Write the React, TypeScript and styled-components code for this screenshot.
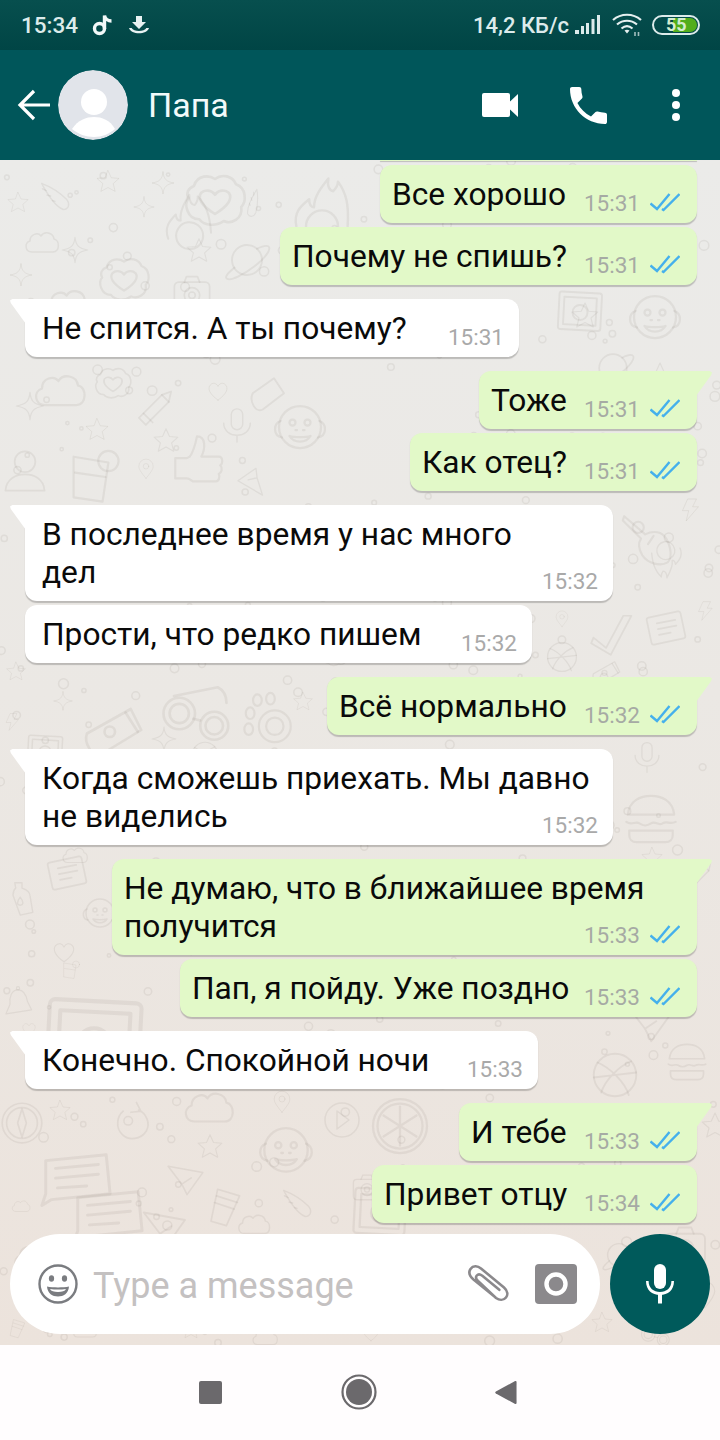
import React from "react";
import styled, { createGlobalStyle } from "styled-components";

const Global = createGlobalStyle`
  html, body { margin: 0; padding: 0; background: #fff; }
  * { box-sizing: border-box; }
`;

const Screen = styled.div`
  width: 720px;
  height: 1440px;
  display: flex;
  flex-direction: column;
  overflow: hidden;
  font-family: Roboto, "Noto Sans", sans-serif;
`;

const StatusBar = styled.div`
  height: 50px;
  flex: none;
  display: flex;
  align-items: center;
  padding: 0 20px 0 21px;
  background: linear-gradient(#074f4e, #004545);
  color: #dcebeb;
  font-size: 22.5px;
  font-weight: 500;
`;
const StatusLeft = styled.div`
  display: flex;
  align-items: center;
  gap: 14px;
`;
const StatusRight = styled.div`
  margin-left: auto;
  display: flex;
  align-items: center;
  gap: 5px;
`;
const StatusTime = styled.span`
  width: 57px;
`;
const Speed = styled.span`
  font-size: 22px;
`;
const WifiIcon = styled.svg`
  margin-left: 5px;
  fill: none;
  stroke: #e6f0f0;
  stroke-width: 2.2;
`;
const Battery = styled.div`
  position: relative;
  width: 48px;
  height: 20px;
  margin-left: 5px;
  border: 2px solid #dcebeb;
  border-radius: 10px;
  overflow: hidden;
  display: flex;
  justify-content: flex-end;
  align-items: stretch;
  padding: 1px;
`;
const BatteryFill = styled.div`
  width: 24px;
  background: #52ad1c;
  border-radius: 0 8px 8px 0;
`;
const BatteryText = styled.span`
  position: absolute;
  left: 12px;
  top: -3px;
  font-size: 18px;
  line-height: 22px;
  font-weight: 700;
  color: #d4ecd0;
`;

const Toolbar = styled.header`
  height: 110px;
  flex: none;
  display: flex;
  align-items: center;
  padding-left: 17px;
  background: #00565a;
  color: #fff;
`;
const Avatar = styled.div`
  width: 70px;
  height: 70px;
  margin-left: 7px;
  border-radius: 50%;
  overflow: hidden;
  flex: none;
`;
const Title = styled.div`
  margin-left: 20px;
  font-size: 34px;
  color: #f2fafa;
`;
const ToolActions = styled.div`
  margin-left: auto;
  display: flex;
  align-items: center;
  padding-right: 38px;
`;
const ToolIcon = styled.svg<{ $ml: number }>`
  display: block;
  margin-left: ${(p) => p.$ml}px;
  fill: #fff;
`;

const Chat = styled.main`
  position: relative;
  flex: 1;
  min-height: 0;
  display: flex;
  flex-direction: column;
  overflow: hidden;
  background: linear-gradient(#ebebe9 0%, #ebe8e4 45%, #ece3dc 100%);
`;
const Wallpaper = styled.svg`
  position: absolute;
  inset: 0;
  fill: none;
  stroke: rgba(118, 108, 96, 0.1);
  stroke-width: 1.5;
  stroke-linejoin: round;
  stroke-linecap: round;
`;
const MessageList = styled.div`
  position: relative;
  flex: 1;
  min-height: 0;
  display: flex;
  flex-direction: column;
`;
const PrevEdge = styled.div`
  align-self: flex-end;
  width: 317px;
  height: 1px;
  margin-right: 23px;
  background: #e2f8c8;
  box-shadow: 0 1px 1px rgba(0, 0, 0, 0.22);
`;
const Bubble = styled.div<{ $out?: boolean; $tail?: boolean; $w: number }>`
  position: relative;
  width: ${(p) => p.$w}px;
  align-self: ${(p) => (p.$out ? "flex-end" : "flex-start")};
  margin: ${(p) => (p.$tail ? 14 : 4)}px ${(p) => (p.$out ? "23px" : "0")} 0
    ${(p) => (p.$out ? "0" : "25px")};
  padding: 11px ${(p) => (p.$out ? 17 : 15)}px 9px ${(p) => (p.$out ? 12 : 17)}px;
  background: ${(p) => (p.$out ? "#e2f9c8" : "#ffffff")};
  border-radius: 12px;
  ${(p) => p.$tail && (p.$out ? "border-top-right-radius: 0;" : "border-top-left-radius: 0;")}
  box-shadow: 0 1.5px 1px rgba(0, 0, 0, 0.2);
  font-size: 31.7px;
  line-height: 38px;
  color: #0a0a0a;

  ${(p) =>
    p.$tail &&
    `&::before {
      content: "";
      position: absolute;
      top: 0;
      ${p.$out ? "right: -15px;" : "left: -15px;"}
      width: 16px;
      height: 25px;
      background: ${p.$out ? "#e2f9c8" : "#ffffff"};
      clip-path: ${
        p.$out
          ? "polygon(0 0, 85% 0, 100% 6%, 95% 16%, 0 100%)"
          : "polygon(100% 0, 15% 0, 0 6%, 5% 16%, 100% 100%)"
      };
    }`}
`;
const LastLine = styled.div`
  display: flex;
  justify-content: space-between;
  align-items: flex-end;
  white-space: nowrap;
`;
const Meta = styled.div<{ $out?: boolean }>`
  display: flex;
  align-items: center;
  gap: 10px;
  height: 24px;
  margin-bottom: -1px;
  font-size: 22.5px;
  line-height: 24px;
  color: ${(p) => (p.$out ? "#a6aaa4" : "#a9a9a9")};
`;

const InputRow = styled.div`
  position: relative;
  flex: none;
  display: flex;
  gap: 10px;
  padding: 0 10px 11px;
`;
const InputPill = styled.div`
  flex: 1;
  height: 100px;
  display: flex;
  align-items: center;
  padding: 0 23px 0 28px;
  background: #fff;
  border-radius: 50px;
`;
const Placeholder = styled.span`
  margin: 3px 0 0 15px;
  font-size: 36px;
  color: #c4c1c1;
`;
const PillIcons = styled.div`
  margin-left: auto;
  display: flex;
  align-items: center;
  gap: 26px;
`;
const MicButton = styled.div`
  width: 100px;
  height: 100px;
  flex: none;
  display: flex;
  align-items: center;
  justify-content: center;
  border-radius: 50%;
  background: #005a5b;
`;

const NavBar = styled.nav`
  height: 95px;
  flex: none;
  display: grid;
  grid-template-columns: 149px 148px 146px;
  justify-content: center;
  align-items: center;
  justify-items: center;
  padding: 0 6px 1px 0;
  background: #fffdfe;
`;
const NavSquare = styled.div`
  width: 23px;
  height: 23px;
  border-radius: 2px;
  background: #6b696c;
`;

type Msg = { lines: string[]; time: string; out?: boolean; tail?: boolean; w: number };
const messages: Msg[] = [
  { lines: ["Все хорошо"], time: "15:31", out: true, w: 317 },
  { lines: ["Почему не спишь?"], time: "15:31", out: true, w: 417 },
  { lines: ["Не спится. А ты почему?"], time: "15:31", tail: true, w: 494 },
  { lines: ["Тоже"], time: "15:31", out: true, tail: true, w: 218 },
  { lines: ["Как отец?"], time: "15:31", out: true, w: 287 },
  { lines: ["В последнее время у нас много", "дел"], time: "15:32", tail: true, w: 588 },
  { lines: ["Прости, что редко пишем"], time: "15:32", w: 507 },
  { lines: ["Всё нормально"], time: "15:32", out: true, tail: true, w: 370 },
  { lines: ["Когда сможешь приехать. Мы давно", "не виделись"], time: "15:32", tail: true, w: 588 },
  { lines: ["Не думаю, что в ближайшее время", "получится"], time: "15:33", out: true, tail: true, w: 585 },
  { lines: ["Пап, я пойду. Уже поздно"], time: "15:33", out: true, w: 517 },
  { lines: ["Конечно. Спокойной ночи"], time: "15:33", tail: true, w: 513 },
  { lines: ["И тебе"], time: "15:33", out: true, tail: true, w: 238 },
  { lines: ["Привет отцу"], time: "15:34", out: true, w: 325 },
];

const Ticks = () => (
  <svg width="30" height="20" viewBox="0 0 30 20" fill="none" stroke="#45b0ec" strokeWidth="2.4">
    <path d="M0.5 10.5 L7 16 L19.5 1" />
    <path d="M12 16 L13.5 17 L29.5 1" />
  </svg>
);

/* ---- wallpaper doodles, each drawn in a 40x40 box ---- */
const shapes: Record<string, React.ReactNode> = {
  star: <path d="M20 4l5 11 12 1-9 8 3 12-11-6-11 6 3-12-9-8 12-1z" />,
  sparkle: <path d="M20 3c1 11 5 15 17 17-12 2-16 6-17 17-1-11-5-15-17-17 12-2 16-6 17-17z" />,
  heart: <path d="M20 34C6 24 4 16 8 11c4-5 10-3 12 2 2-5 8-7 12-2 4 5 2 13-12 23z" />,
  cloud: <path d="M10 30c-7 0-8-9-2-11 0-7 8-9 11-5 3-5 12-4 13 3 6 1 6 13-1 13z" />,
  puff: (
    <>
      <path d="M8 12c2-7 9-6 12-4 4-3 10-2 12 3 6 2 6 10 3 13 1 7-6 10-10 8-4 3-11 3-14-1-7 0-9-9-6-12-2-3 0-6 3-7z" />
      <path d="M20 28c-8-5-10-9-8-12 2-2 6-2 8 1 2-3 6-3 8-1 2 3 0 7-8 12z" />
    </>
  ),
  planet: (
    <>
      <circle cx="20" cy="20" r="12" />
      <path d="M10 26C4 31 2 34 4 35c3 2 13-3 22-10s14-14 11-16c-2-1-5 0-9 2" />
    </>
  ),
  camera: (
    <>
      <rect x="4" y="11" width="32" height="24" rx="4" />
      <path d="M13 11l2-5h10l2 5" />
      <circle cx="20" cy="23" r="7" />
      <circle cx="20" cy="23" r="3" />
    </>
  ),
  comet: (
    <>
      <path d="M4 6c8 3 20 10 28 18 4 5 2 11-4 11-8-3-16-14-24-29z" />
      <path d="M9 14l-4-2M14 20l-4-1M19 26l-3-1" />
    </>
  ),
  flame: (
    <>
      <path d="M4 34c-2-9 3-13 8-17 0 3 1 5 3 5 0-7 5-13 9-18-1 5 1 8 3 8 2-2 3-4 3-6 5 7 7 14 6 28" />
      <circle cx="20" cy="34" r="10" />
    </>
  ),
  pencil: (
    <>
      <path d="M6 26L26 6l8-3-2 9-20 20z" />
      <path d="M10 22l8 8M26 6l6 6" />
    </>
  ),
  mic: (
    <>
      <rect x="14" y="3" width="12" height="22" rx="6" />
      <path d="M6 18c0 17 28 17 28 0M20 31v7" />
    </>
  ),
  thumb: (
    <path d="M15 17c3-4 4-9 5-14 6 0 6 8 3 14h12c3 0 3 5 1 6 2 2 1 5-1 6 1 2 0 5-2 5H17c-2-1-2-2-4-2H5V18h8z" />
  ),
  glass: (
    <>
      <path d="M8 6l24 4-4 27-20-3z" />
      <circle cx="32" cy="9" r="7" />
      <path d="M9 17l21 3" />
    </>
  ),
  person: (
    <>
      <circle cx="20" cy="12" r="9" />
      <path d="M3 37c1-11 10-14 17-14s16 3 17 14z" />
    </>
  ),
  chat: (
    <>
      <path d="M5 8l31-3 2 20-30 3-5 3 2-6z" />
      <path d="M10 12l22-2M10 17l22-2M11 22l15-1" />
    </>
  ),
  card: (
    <>
      <rect x="5" y="8" width="30" height="24" rx="2" transform="rotate(-12 20 20)" />
      <path d="M12 16l16-3M13 21l16-3M14 26l10-2" />
    </>
  ),
  lemon: (
    <>
      <circle cx="20" cy="20" r="18" />
      <circle cx="20" cy="20" r="15" />
      <path d="M20 20V7M20 20l11-7M20 20l11 7M20 20v13M20 20L9 27M20 20L9 13" />
    </>
  ),
  play: (
    <>
      <circle cx="20" cy="20" r="17" />
      <path d="M15 11l12 9-12 9z" />
    </>
  ),
  compass: (
    <>
      <circle cx="20" cy="20" r="18" />
      <circle cx="20" cy="20" r="14" />
      <path d="M20 7l4 13-4 13-4-13z" />
    </>
  ),
  reload: <path d="M24 4l4 8-9 1M26 11c7 3 11 12 7 19-5 8-16 9-22 3C5 27 6 17 12 12" />,
  monkey: (
    <>
      <circle cx="20" cy="18" r="14" />
      <path d="M7 14C2 16 2 24 8 25M33 14c5 2 5 10-1 11" />
      <circle cx="15" cy="15" r="2" />
      <circle cx="25" cy="15" r="2" />
      <path d="M13 24c3 5 11 5 14 0-3 1-11 1-14 0zM17 20h1M22 20h1" />
    </>
  ),
  plane: <path d="M3 6l33 6-15 21-5-10zM16 23l9-6" />,
  tube: (
    <>
      <path d="M16 3l20 6-12 27-14-4z" />
      <path d="M15 9l19 6M13 15l18 6" />
    </>
  ),
  bolt: <path d="M17 3h13l-6 12h9L14 37l4-16H9z" />,
  glasses: (
    <>
      <circle cx="11" cy="22" r="9" />
      <circle cx="11" cy="22" r="5.5" />
      <circle cx="31" cy="29" r="8" />
      <circle cx="31" cy="29" r="5" />
      <path d="M8 12l20-4 5-1c4 2 5 6 5 9M19 25l4 1" />
    </>
  ),
  torch: (
    <>
      <path d="M4 22l25-14 6 12-23 14c-5 2-10-7-8-12z" />
      <path d="M26 10l7 11" />
      <circle cx="17" cy="21" r="3" />
    </>
  ),
  paw: (
    <>
      <circle cx="24" cy="25" r="11" />
      <circle cx="24" cy="25" r="6" />
      <ellipse cx="7" cy="16" rx="3" ry="4" />
      <ellipse cx="12" cy="7" rx="3" ry="4" />
      <ellipse cx="21" cy="6" rx="3" ry="4" />
      <ellipse cx="6" cy="27" rx="3" ry="4" />
    </>
  ),
  bottle: (
    <>
      <path d="M12 3h8v6c6 2 9 5 9 9l3 18-14 3-8-22c0-4 2-7 3-8z" />
      <path d="M18 19c4 5 4 9 0 9s-4-4 0-9z" />
    </>
  ),
  bell: (
    <>
      <path d="M20 6c9 0 11 9 12 15l5 10-32 5 5-12C9 15 12 6 20 6z" />
      <circle cx="20" cy="4" r="2" />
    </>
  ),
  tablet: (
    <>
      <rect x="3" y="6" width="34" height="30" rx="2" transform="rotate(3 20 20)" />
      <rect x="7" y="10" width="26" height="22" transform="rotate(3 20 20)" />
      <circle cx="20" cy="22" r="6" />
    </>
  ),
  guitar: (
    <>
      <path d="M3 3l15 13c6-3 12-2 15 3 4 7 4 14 1 17-5 3-14 1-18-5-3-5-3-9-1-12L2 6z" />
      <circle cx="13" cy="11" r="4" />
      <path d="M20 23l4-6" />
    </>
  ),
  check: <path d="M3 24l11 9L29 5h7L18 39 1 29z" />,
  ball: (
    <>
      <circle cx="20" cy="20" r="17" />
      <path d="M6 10c10 4 22 16 25 26M33 9C23 13 12 24 9 34M3 22c9-1 26-3 34-4" />
    </>
  ),
  pin: (
    <>
      <path d="M20 37C10 25 7 20 7 15a13 13 0 0126 0c0 5-3 10-13 22z" />
      <circle cx="20" cy="15" r="5" />
    </>
  ),
  burger: (
    <>
      <path d="M4 17C5 7 13 4 20 4s15 3 16 13z" />
      <path d="M3 22c4 3 6-1 9 1s5 2 8 0 5 2 8 0 5 1 9-1M5 28h30v3c0 3-2 5-5 5H10c-3 0-5-2-5-5z" />
    </>
  ),
  clip: <path d="M7 17L24 5l8 12-17 13c-6 3-11-7-8-13z" />,
};

const placed: [string, number, number, number, number?][] = [
  ["comet", 38, 178, 36], ["star", 6, 190, 24], ["star", 95, 168, 26], ["sparkle", 150, 170, 26],
  ["sparkle", 132, 195, 24], ["flame", 160, 190, 54, -8], ["comet", 240, 190, 28, 60], ["flame", 290, 172, 64],
  ["cloud", 22, 222, 40], ["sparkle", 60, 235, 30], ["puff", 95, 250, 58], ["star", 185, 236, 28],
  ["planet", 222, 235, 50], ["camera", 170, 270, 44], ["sparkle", 8, 262, 26], ["cloud", 40, 276, 56],
  ["monkey", 625, 290, 60], ["star", 570, 300, 30], ["tablet", 555, 285, 50], ["puff", 180, 165, 70],
  ["sparkle", 14, 390, 32], ["pencil", 132, 388, 46], ["star", 84, 416, 26], ["star", 152, 426, 28],
  ["thumb", 168, 432, 58], ["mic", 218, 406, 38], ["heart", 205, 378, 26], ["glass", 62, 448, 58],
  ["person", 2, 448, 46], ["pin", 135, 458, 22], ["plane", 236, 462, 34, 200], ["cloud", 30, 360, 60],
  ["clip", 244, 372, 50], ["monkey", 270, 400, 60], ["puff", 92, 362, 42],
  ["guitar", 620, 512, 56], ["flame", 650, 545, 36, 170], ["bolt", 677, 497, 26], ["bolt", 694, 600, 22],
  ["card", 643, 605, 46], ["check", 590, 610, 46], ["ball", 545, 640, 34], ["pin", 553, 610, 18],
  ["torch", 590, 655, 34], ["star", 645, 360, 30], ["sparkle", 545, 395, 30], ["planet", 590, 345, 46],
  ["heart", 540, 440, 32], ["thumb", 580, 430, 44], ["comet", 640, 460, 34], ["puff", 320, 640, 30],
  ["star", 5, 660, 22], ["sparkle", 52, 690, 22], ["bolt", 2, 712, 20], ["torch", 80, 695, 70],
  ["glasses", 160, 675, 70], ["paw", 240, 690, 58], ["star", 292, 690, 22], ["sparkle", 150, 725, 28],
  ["tablet", 25, 730, 40], ["ball", 190, 740, 30], ["mic", 630, 740, 34], ["burger", 622, 790, 58],
  ["star", 640, 845, 24], ["pin", 310, 760, 22], ["bottle", 4, 880, 36], ["card", 44, 850, 46],
  ["heart", 50, 938, 28], ["bell", 2, 985, 32], ["tablet", 40, 985, 108], ["monkey", 80, 895, 40],
  ["cloud", 60, 840, 30], ["pencil", 680, 860, 36], ["glass", 60, 960, 20], ["plane", 625, 1000, 50],
  ["ball", 590, 1050, 50], ["burger", 665, 1040, 44], ["star", 700, 1110, 30], ["heart", 20, 1020, 18],
  ["compass", 0, 1101, 44], ["star", 48, 1098, 24], ["reload", 110, 1098, 44], ["cloud", 180, 1078, 58],
  ["play", 322, 1100, 40], ["lemon", 370, 1096, 60], ["monkey", 255, 1122, 62], ["chat", 36, 1145, 78],
  ["chat", 68, 1182, 78], ["plane", 165, 1160, 42], ["tube", 200, 1186, 44], ["cloud", 235, 1205, 38],
  ["star", 196, 1132, 28], ["comet", 280, 1185, 36], ["cloud", 10, 1195, 22], ["camera", 350, 1170, 34],
  ["pin", 270, 1090, 24], ["tablet", 350, 1180, 60], ["plane", 140, 1205, 50],
  ["cloud", 10, 1232, 50], ["burger", 70, 1310, 30], ["star", 180, 1318, 22], ["cloud", 250, 1322, 30],
  ["heart", 360, 1322, 22], ["comet", 560, 1240, 34], ["planet", 600, 1236, 38], ["camera", 660, 1220, 50],
  ["pin", 690, 1280, 30], ["star", 590, 1310, 24], ["glasses", 640, 1318, 30], ["tube", 5, 1318, 22],
];

const dots = (() => {
  let seed = 42;
  const rnd = () => {
    seed = (seed * 16807) % 2147483647;
    return seed / 2147483647;
  };
  return Array.from({ length: 330 }, () => ({
    x: rnd() * 720,
    y: rnd() * 1185,
    r: 1.6 + rnd() * 3.4,
  }));
})();

const App = () => (
  <Screen>
    <Global />
    <StatusBar>
      <StatusLeft>
        <StatusTime>15:34</StatusTime>
        <svg width="22" height="24" viewBox="0 0 22 24" fill="none" stroke="#f2f8f8" strokeWidth="3.4">
          <circle cx="7.5" cy="15.5" r="5" />
          <path d="M12.5 16V2.5c.5 3 3.5 5.5 7 5.5" />
        </svg>
        <svg width="22" height="20" viewBox="0 0 22 20" fill="#e8f2f2">
          <path d="M8 1h6v6h4l-7 7-7-7h4z" />
          <path d="M1 13c2 7 18 7 20 0h-2.6c-2 4-12.8 4-14.8 0z" />
        </svg>
      </StatusLeft>
      <StatusRight>
        <Speed>14,2 КБ/с</Speed>
        <svg width="28" height="22" viewBox="0 0 28 22" fill="#dcebeb">
          <rect x="1" y="16" width="4" height="4" />
          <rect x="7" y="12" width="3" height="8" />
          <rect x="12" y="9" width="3" height="11" />
          <rect x="17.5" y="5" width="3" height="15" />
          <rect x="23" y="1" width="3" height="19" />
        </svg>
        <WifiIcon width="30" height="24" viewBox="0 0 30 24">
          <path d="M1 7c8-7 20-7 28 0" />
          <path d="M5 11.5c6-5 14-5 20 0" />
          <path d="M9.5 15.5c3.5-3 7.5-3 11 0" />
          <path d="M12.5 17.5L15 20.5l2.5-3c-1.5-1-3.5-1-5 0z" fill="#e6f0f0" stroke="none" />
          <path d="M23 19v4M26.5 19v4" strokeWidth="1.6" opacity=".7" />
        </WifiIcon>
        <Battery>
          <BatteryFill />
          <BatteryText>55</BatteryText>
        </Battery>
      </StatusRight>
    </StatusBar>

    <Toolbar>
      <svg width="34" height="34" viewBox="0 0 34 34" fill="none" stroke="#fff" strokeWidth="3.2">
        <path d="M33 17H3M17 3L3 17l14 14" />
      </svg>
      <Avatar>
        <svg width="70" height="70" viewBox="0 0 70 70">
          <circle cx="35" cy="35" r="35" fill="#e1e4ea" />
          <circle cx="36" cy="32" r="13" fill="#fff" />
          <path d="M14 59c6-9 14-12 22-12s16 3 21 12c-6 5-13 8-21 8s-16-3-22-8z" fill="#fff" />
        </svg>
      </Avatar>
      <Title>Папа</Title>
      <ToolActions>
        <ToolIcon $ml={0} width="37" height="25" viewBox="0 0 37 25">
          <rect x="0" y="0" width="28" height="24" rx="2" />
          <path d="M27 9.5L36 1v23l-9-8.5z" />
        </ToolIcon>
        <ToolIcon $ml={51} width="37" height="37" viewBox="3 3 18 18">
          <path d="M6.62 10.79c1.44 2.83 3.76 5.14 6.59 6.59l2.2-2.2c.27-.27.67-.36 1.02-.24 1.12.37 2.33.57 3.57.57.55 0 1 .45 1 1V20c0 .55-.45 1-1 1-9.39 0-17-7.61-17-17 0-.55.45-1 1-1h3.5c.55 0 1 .45 1 1 0 1.25.2 2.45.57 3.57.11.35.03.74-.25 1.02l-2.2 2.2z" />
        </ToolIcon>
        <ToolIcon $ml={63} width="12" height="36" viewBox="0 0 12 36">
          <circle cx="6" cy="6" r="4" />
          <circle cx="6" cy="18" r="4" />
          <circle cx="6" cy="30" r="4" />
        </ToolIcon>
      </ToolActions>
    </Toolbar>

    <Chat>
      <Wallpaper width="720" height="1185" viewBox="0 0 720 1185">
        <g transform="translate(0 -160)">
          {placed.map(([k, x, y, s, r], i) => (
            <g key={i} transform={`translate(${x} ${y}) scale(${s / 40}) rotate(${r ?? 0} 20 20)`}>
              {shapes[k]}
            </g>
          ))}
        </g>
        {dots.map((d, i) => (
          <circle key={i} cx={d.x} cy={d.y} r={d.r} />
        ))}
      </Wallpaper>
      <MessageList>
        <PrevEdge />
        {messages.map((m, i) => (
          <Bubble key={i} $out={m.out} $tail={m.tail} $w={m.w}>
            {m.lines.slice(0, -1).map((l) => (
              <div key={l}>{l}</div>
            ))}
            <LastLine>
              <span>{m.lines[m.lines.length - 1]}</span>
              <Meta $out={m.out}>
                <span>{m.time}</span>
                {m.out && <Ticks />}
              </Meta>
            </LastLine>
          </Bubble>
        ))}
      </MessageList>
      <InputRow>
        <InputPill>
          <svg width="40" height="40" viewBox="0 0 40 40" fill="none" stroke="#7a7c80" strokeWidth="2.4">
            <circle cx="20" cy="20" r="18.5" />
            <ellipse cx="13.5" cy="14.5" rx="2.6" ry="3.2" fill="#7a7c80" stroke="none" />
            <ellipse cx="26.5" cy="14.5" rx="2.6" ry="3.2" fill="#7a7c80" stroke="none" />
            <path d="M9 22.5c6 1.2 16 1.2 22 0-.6 7-5.5 10-11 10s-10.4-3-11-10z" fill="#7a7c80" stroke="none" />
            <path d="M12 25c5 .8 11 .8 16 0-1 2.3-4 3-8 3s-7-.7-8-3z" fill="#fff" stroke="none" />
          </svg>
          <Placeholder>Type a message</Placeholder>
          <PillIcons>
            <svg width="44" height="40" viewBox="0 0 44 40" fill="none" stroke="#8b898c" strokeWidth="2.6" strokeLinecap="round">
              <path d="M30 33L8.5 15.5c-4-3.5-5-7.5-3-10.5 2.5-3.5 7-3.5 10.5-.5l23 19c4 3.5 4 7.5 2 10-2.5 3-6.5 3-10 .5L13 17c-2-2-2.5-4-1.2-5.5 1.3-1.5 3.5-1.3 5.5.3l17 14" />
            </svg>
            <svg width="42" height="40" viewBox="0 0 42 40">
              <rect x="0" y="0" width="42" height="40" rx="4" fill="#8b898c" />
              <circle cx="21" cy="20" r="9.5" fill="none" stroke="#fff" strokeWidth="4.4" />
            </svg>
          </PillIcons>
        </InputPill>
        <MicButton>
          <svg width="30" height="40" viewBox="0 0 30 40" fill="#fff">
            <rect x="9" y="0" width="12" height="25" rx="6" />
            <path d="M1 17c0 9 6 14 14 14s14-5 14-14h-2.6c0 7-5 11-11.4 11S3.6 24 3.6 17z" />
            <rect x="13" y="30" width="4" height="9.5" />
          </svg>
        </MicButton>
      </InputRow>
    </Chat>

    <NavBar>
      <NavSquare />
      <svg width="36" height="36" viewBox="0 0 36 36">
        <circle cx="18" cy="18" r="16.5" fill="none" stroke="#6b696c" strokeWidth="2.2" />
        <circle cx="18" cy="18" r="13" fill="#6b696c" />
      </svg>
      <svg width="22" height="25" viewBox="0 0 24 26">
        <path d="M22 0.5c.8-.4 1.5 0 1.5 1v23c0 1-.7 1.4-1.5 1L1 14c-1-.6-1-1.4 0-2z" fill="#6b696c" />
      </svg>
    </NavBar>
  </Screen>
);

export default App;
